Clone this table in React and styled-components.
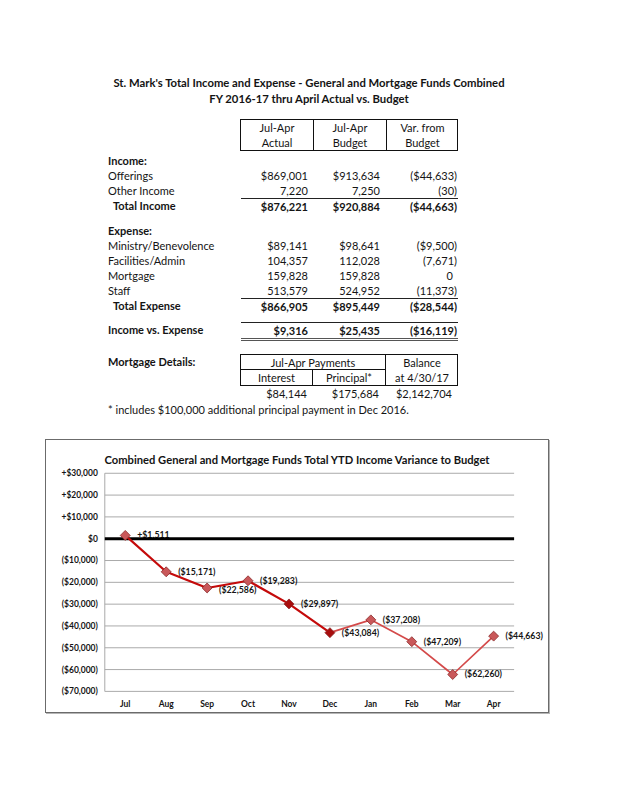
import React from 'react'
import styled, { createGlobalStyle } from 'styled-components'

const GlobalStyle = createGlobalStyle`
  body{
    margin:0;
    background:#fff;
    font-family: Lato, "Liberation Sans", sans-serif;
    color:#141414;
  }
`;

const months = ['Jul','Aug','Sep','Oct','Nov','Dec','Jan','Feb','Mar','Apr'];
const values = [1511,-15171,-22586,-19283,-29897,-43084,-37208,-47209,-62260,-44663];
const levels = [30000,20000,10000,0,-10000,-20000,-30000,-40000,-50000,-60000,-70000];

const fmt = (v) => {
  const s = Math.abs(v).toLocaleString('en-US');
  return v >= 0 ? `+$${s}` : `($${s})`;
};
const lvl = (v) => {
  if (v === 0) return '$0';
  const s = Math.abs(v).toLocaleString('en-US');
  return v > 0 ? `+$${s}` : `($${s})`;
};

// plot geometry (svg coords)
const AX = 58, STEP = 41.1, ZERO = 71, PER = 0.00219, RIGHT = 469;
const px = (i) => AX + STEP * (i + 0.5);
const py = (v) => ZERO - v * PER;

const Chart = () => {
  const pts = values.map((v, i) => [px(i), py(v)]);
  const diamond = (x, y, r) => `${x},${y - r} ${x + r},${y} ${x},${y + r} ${x - r},${y}`;
  return (
    <ChartBox>
      <ChartTitle>Combined General and Mortgage Funds Total YTD Income Variance to Budget</ChartTitle>
      <svg width="502" height="245" viewBox="0 0 502 245">
        {levels.map((l) => (
          <g key={l}>
            {l !== 0 && <line x1={AX} x2={RIGHT} y1={py(l)} y2={py(l)} stroke="#a9a9a9" strokeWidth="1" />}
            <text x="51" y={py(l) + 3} textAnchor="end" fontSize="8.5" fontWeight="700" fontFamily="Lato, sans-serif" fill="#141414">{lvl(l)}</text>
          </g>
        ))}
        <line x1={AX} x2={AX} y1={py(30000)} y2={py(-70000)} stroke="#a9a9a9" strokeWidth="1" />
        {months.map((m, i) => (
          <text key={m} x={px(i)} y="240" textAnchor="middle" fontSize="8.5" fontWeight="700" fontFamily="Lato, sans-serif" fill="#141414">{m}</text>
        ))}
        {values.map((v, i) => (
          <text key={i} x={pts[i][0] + 12} y={pts[i][1] + (i === 2 ? 5 : 3)} fontSize="8.8" fontWeight="700" fontFamily="Lato, sans-serif" fill="#141414">{fmt(v)}</text>
        ))}
        <line x1={AX} x2={RIGHT} y1={ZERO} y2={ZERO} stroke="#000" strokeWidth="3" />
        <polyline points={pts.slice(0, 6).map((p) => p.join(',')).join(' ')} fill="none" stroke="#c40a0a" strokeWidth="2.2" strokeLinejoin="round" />
        <polyline points={pts.slice(5).map((p) => p.join(',')).join(' ')} fill="none" stroke="#d44a4a" strokeWidth="1.7" strokeLinejoin="round" />
        {pts.map(([x, y], i) => (
          <polygon key={i} points={diamond(x, y, 5)} fill={i === 4 || i === 5 ? '#a80d0d' : '#c9585a'} stroke="#8a2a2a" strokeWidth="0.8" />
        ))}
      </svg>
    </ChartBox>
  );
};

const App = () => (
  <Page>
    <GlobalStyle />
    <Title>St. Mark's Total Income and Expense - General and Mortgage Funds Combined</Title>
    <Title>FY 2016-17 thru April Actual vs. Budget</Title>

    <Sheet>
      <Row>
        <span />
        <HeadBox>
          <HeadCell>Jul-Apr<br />Actual</HeadCell>
          <HeadCell>Jul-Apr<br />Budget</HeadCell>
          <HeadCell>Var. from<br />Budget</HeadCell>
        </HeadBox>
      </Row>

      <Row $gap={2}><Label $bold>Income:</Label></Row>
      <Row><Label>Offerings</Label><Num>$869,001</Num><Num $pr={6}>$913,634</Num><Num $pr={1}>($44,633)</Num></Row>
      <Row><Label>Other Income</Label><Num>7,220</Num><Num $pr={6}>7,250</Num><Num $pr={1}>(30)</Num></Row>
      <Row $total><Label $bold $indent>Total Income</Label><Num $bold>$876,221</Num><Num $bold $pr={6}>$920,884</Num><Num $bold $pr={1}>($44,663)</Num></Row>

      <Row $gap={9}><Label $bold>Expense:</Label></Row>
      <Row><Label>Ministry/Benevolence</Label><Num>$89,141</Num><Num $pr={6}>$98,641</Num><Num $pr={1}>($9,500)</Num></Row>
      <Row><Label>Facilities/Admin</Label><Num>104,357</Num><Num $pr={6}>112,028</Num><Num $pr={1}>(7,671)</Num></Row>
      <Row><Label>Mortgage</Label><Num>159,828</Num><Num $pr={6}>159,828</Num><Num $pr={5}>0</Num></Row>
      <Row><Label>Staff</Label><Num>513,579</Num><Num $pr={6}>524,952</Num><Num $pr={1}>(11,373)</Num></Row>
      <Row $total><Label $bold $indent>Total Expense</Label><Num $bold>$866,905</Num><Num $bold $pr={6}>$895,449</Num><Num $bold $pr={1}>($28,544)</Num></Row>

      <Row $gap={8} $total $double><Label $bold>Income vs. Expense</Label><Num $bold>$9,316</Num><Num $bold $pr={6}>$25,435</Num><Num $bold $pr={1}>($16,119)</Num></Row>

      <Row $gap={13}>
        <Label $bold>Mortgage Details:</Label>
        <MortBox>
          <PayHead>Jul-Apr Payments</PayHead>
          <Balance>Balance<br />at 4/30/17</Balance>
          <SubHead $line>Interest</SubHead>
          <SubHead $line>Principal*</SubHead>
        </MortBox>
      </Row>
      <Row><span /><Num $pr={6}>$84,144</Num><Num $pr={7}>$175,684</Num><Num $pr={6}>$2,142,704</Num></Row>
      <Note>* includes $100,000 additional principal payment in Dec 2016.</Note>
    </Sheet>

    <Chart />
  </Page>
);

const Page = styled.div`
  width:618px;
  height:800px;
  padding-top:75px;
  box-sizing:border-box;
`;

const Title = styled.div`
  text-align:center;
  font-size:11.3px;
  line-height:16px;
  font-weight:700;
`;

const Sheet = styled.div`
  margin:12px 0 0 108px;
  width:350px;
  font-size:11px;
`;

const Row = styled.div`
  display:grid;
  grid-template-columns:133px 72px 73px 72px;
  line-height:15px;
  margin-top:${(p) => p.$gap || 0}px;
  & > ${() => Num}{
    border-top:${(p) => (p.$total ? '1px solid #222' : 'none')};
    border-bottom:${(p) => (p.$double ? '3px double #555' : 'none')};
  }
`;

const Label = styled.div`
  white-space:nowrap;
  font-weight:${(p) => (p.$bold ? 700 : 400)};
  padding-left:${(p) => (p.$indent ? 5 : 0)}px;
`;

const Num = styled.div`
  text-align:right;
  white-space:nowrap;
  padding-right:${(p) => (p.$pr ?? 5)}px;
  font-weight:${(p) => (p.$bold ? 700 : 400)};
`;

const HeadBox = styled.div`
  grid-column:2 / 5;
  display:grid;
  grid-template-columns:72px 73px 72px;
  border:1px solid #111;
  margin-left:-1px;
`;

const HeadCell = styled.div`
  text-align:center;
  & + &{ border-left:1px solid #111; }
`;

const MortBox = styled.div`
  grid-column:2 / 5;
  display:grid;
  grid-template-columns:72px 73px 72px;
  grid-template-rows:15px 15px;
  border:1px solid #111;
  margin-left:-1px;
`;

const PayHead = styled.div`
  grid-column:1 / 3;
  text-align:center;
  border-bottom:1px solid #111;
  border-right:1px solid #111;
`;

const Balance = styled.div`
  grid-column:3;
  grid-row:1 / 3;
  text-align:center;
`;

const SubHead = styled.div`
  text-align:center;
  border-right:${(p) => (p.$line ? '1px solid #111' : 'none')};
`;

const Note = styled.div`
  line-height:15px;
  margin-top:1px;
  white-space:nowrap;
`;

const ChartBox = styled.div`
  margin:22px 0 0 45px;
  width:502px;
  height:272px;
  border:1px solid #6b6b6b;
  box-shadow:1px 1px 0 #b5b5b5;
  display:flex;
  flex-direction:column;
  align-items:center;
`;

const ChartTitle = styled.div`
  margin:13px 0 1px;
  font-size:11.2px;
  line-height:14px;
  font-weight:700;
  height:14px;
  white-space:nowrap;
`;

export default App
